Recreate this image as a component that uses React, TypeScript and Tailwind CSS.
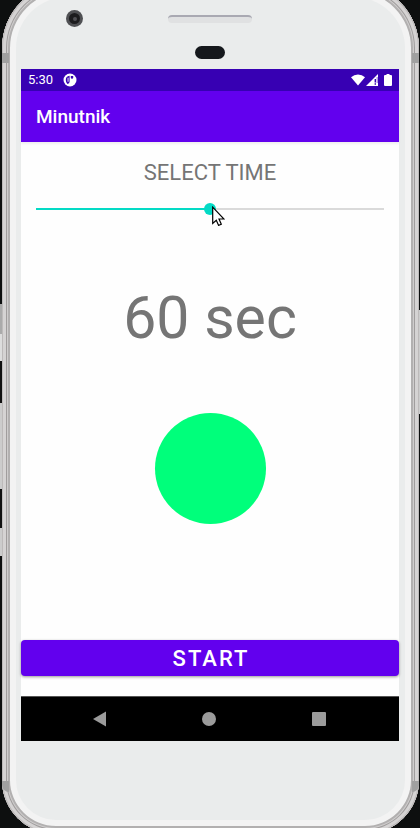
import { useState } from "react";

function StatusBar() {
  return (
    <div className="flex h-[22px] items-center bg-[#3700b3] px-[7px] text-white">
      <span className="text-[13px] leading-[22px]">5:30</span>
      <svg className="ml-[10px] h-[14px] w-[14px]" viewBox="0 0 14 14" aria-hidden="true">
        <circle cx="7" cy="7" r="6.500" fill="#fff" />
        <path d="M6.600 2.800v6q0 2-2.200 2.200Q2.800 9.800 2.800 7q0-3.600 3.800-4.200z" fill="#3700b3" />
        <path d="M4.600 4.800h.9v4h-.9z" fill="#fff" />
        <path d="M7.800 3h2.400v1.500a1.200 1.200 0 0 1-2.400 0z" fill="#3700b3" />
      </svg>
      <div className="ml-auto flex items-center">
        <svg className="h-[12px] w-[14px]" viewBox="0 0 14 12" aria-hidden="true">
          <path d="M0 3.200Q3 .5 7 .5t7 2.700L7 11.500z" fill="#fff" />
        </svg>
        <svg className="ml-px h-[12px] w-[13px]" viewBox="0 0 13 12" aria-hidden="true">
          <path d="M0 12L12 0v12z" fill="#fff" />
          <path d="M8.600 5h1.400v3.500H8.600zM8.600 9.300h1.400v1.400H8.600zM10.800 3h.6v6h-.6z" fill="#3700b3" />
        </svg>
        <svg className="ml-[5px] h-[12px] w-[8px]" viewBox="0 0 8 12" aria-hidden="true">
          <path d="M2.500 0h3v1H7q1 0 1 1v9q0 1-1 1H1q-1 0-1-1V2q0-1 1-1h1.500z" fill="#fff" />
        </svg>
      </div>
    </div>
  );
}

function SpeakerArea() {
  return (
    <div className="relative flex h-[86px] flex-col items-center">
      <div className="absolute left-[45px] top-[27px] flex h-[17px] w-[17px] items-center justify-center rounded-full bg-[#4f5053]">
        <div className="flex h-[11px] w-[11px] items-center justify-center rounded-full bg-[#1c1c1e]">
          <div className="h-1 w-1 rounded-full bg-[#505054]" />
        </div>
      </div>
      <div className="mt-[32px] h-[8px] w-[84px] rounded-[4px] border-t-2 border-[#a9a9b2] bg-[#e0e1e2]" />
      <div className="mt-[23px] h-[13px] w-[30px] rounded-full bg-[#15181c]" />
    </div>
  );
}

function NavBar() {
  return (
    <nav className="flex h-[45px] items-center justify-between border-t border-[#555] bg-black pl-[72px] pr-[73px]">
      <button type="button" aria-label="Back">
        <svg className="h-4 w-[13px]" viewBox="0 0 13 16" aria-hidden="true">
          <path d="M0 8L13 .5v15z" fill="#9b9b9b" />
        </svg>
      </button>
      <button type="button" aria-label="Home" className="h-[14px] w-[14px] rounded-full bg-[#9b9b9b]" />
      <button type="button" aria-label="Recent apps" className="h-[14px] w-[14px] rounded-[1px] bg-[#9b9b9b]" />
    </nav>
  );
}

export default function App() {
  const [seconds, setSeconds] = useState(60);
  const percent = (seconds / 120) * 100;

  return (
    <div className="relative h-screen overflow-hidden bg-[#0d0f0f] pl-[2px] pr-px font-['Roboto',sans-serif]">
      <div className="absolute left-0 top-[304px] h-[252px] w-[2px] bg-[linear-gradient(#aaa_0_30px,#ddd_30px_57px,#111_57px_99px,#ccc_99px_185px,#111_185px_224px,#ccc_224px)]" />
      <div className="absolute right-0 top-[310px] h-[104px] w-[2px] bg-[#ccc]" />
      <div className="relative -mt-[17px] rounded-t-[65px] rounded-b-[54px] bg-[#eaecec] pl-[19px] pr-[20px] pb-[93px] shadow-[inset_0_0_0_1px_#bdbaba,inset_0_0_0_4px_#d5d3d3,inset_0_0_0_5px_#a09d9d,inset_0_0_0_6px_#cfcdcd,inset_0_0_0_8px_#b2b0b0,inset_0_0_0_14px_#f3f3f3]">
        <div className="absolute left-0 top-[70px] h-[10px] w-[7px] bg-[#a0a0a0]" />
        <div className="absolute right-0 top-[70px] h-[10px] w-[7px] bg-[#a0a0a0]" />
        <div className="absolute bottom-[42px] left-0 h-[11px] w-[7px] rounded-bl-full bg-[#a0a0a0]" />
        <div className="absolute bottom-[42px] right-0 h-[11px] w-[7px] rounded-br-full bg-[#a0a0a0]" />
        <SpeakerArea />
        <div className="bg-[#fefefe]">
          <StatusBar />
          <header className="flex h-[51px] items-center bg-[#6200ee] px-[15px] shadow-[0_2px_2px_rgba(0,0,0,0.06)]">
            <h1 className="text-[19px] font-medium leading-6 text-white">Minutnik</h1>
          </header>
          <main className="flex flex-col items-center pt-4 text-[#757575]">
            <label htmlFor="time" className="text-[22px] leading-[30px]">
              SELECT TIME
            </label>
            <div className="relative mt-[15px] flex h-[12px] w-full items-center px-[15px]">
              <div className="relative h-[12px] w-full">
                <div className="mt-[5px] h-[2px] w-full bg-[#dadada]">
                  <div className="h-full bg-[#03dac5]" style={{ width: `${percent}%` }} />
                </div>
                <input
                  id="time"
                  type="range"
                  min={0}
                  max={120}
                  value={seconds}
                  onChange={(e) => setSeconds(Number(e.target.value))}
                  className="absolute inset-0 m-0 h-[12px] w-full appearance-none bg-transparent [&::-webkit-slider-thumb]:h-[12px] [&::-webkit-slider-thumb]:w-[12px] [&::-webkit-slider-thumb]:appearance-none [&::-webkit-slider-thumb]:rounded-full [&::-webkit-slider-thumb]:bg-[#03dac5]"
                />
              </div>
              <svg
                className="pointer-events-none absolute left-1/2 top-[3px] ml-[2px] h-[20px] w-[13px]"
                viewBox="0 0 13 20"
                aria-hidden="true"
              >
                <path
                  d="M.7 1.200v16.300l3.600-3.300 2.300 5.200 2.700-1.200L7 13h5z"
                  fill="#fff"
                  stroke="#000"
                  strokeWidth="1.200"
                />
              </svg>
            </div>
            <p className="mt-[67px] text-[59px] leading-[72px]">{seconds} sec</p>
            <div className="mt-[59px] h-[111px] w-[111px] rounded-full bg-[#00ff7b]" />
            <button
              type="button"
              className="mt-[116px] h-[36px] w-full rounded-[4px] bg-[#6200ee] pl-[2px] text-[22px] font-medium tracking-[2px] text-white shadow-[0_1px_3px_rgba(0,0,0,0.4)]"
            >
              START
            </button>
          </main>
          <div className="h-5" />
          <NavBar />
        </div>
      </div>
    </div>
  );
}
